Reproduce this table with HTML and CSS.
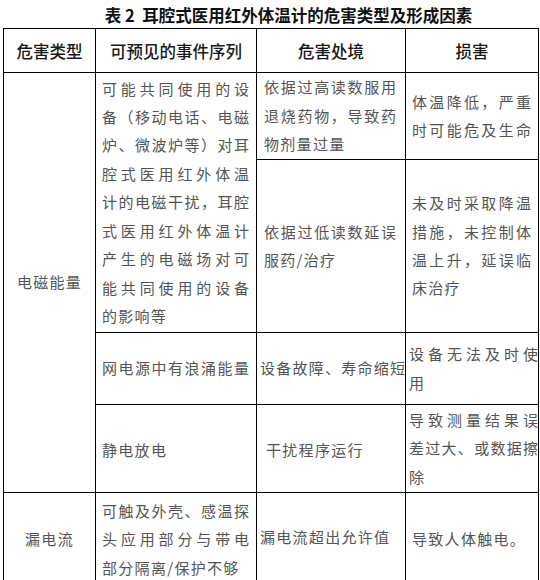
FILE: index.html
```html
<!DOCTYPE html>
<html lang="zh">
<head>
<meta charset="utf-8">
<link rel="stylesheet" href="styles.css">
</head>
<body>
<div class="page">
  <div class="caption">表 2&nbsp; 耳腔式医用红外体温计的危害类型及形成因素</div>
  <table class="hazard">
    <colgroup>
      <col class="c1"><col class="c2"><col class="c3"><col class="c4">
    </colgroup>
    <tr class="head">
      <th>危害类型</th>
      <th>可预见的事件序列</th>
      <th>危害处境</th>
      <th>损害</th>
    </tr>
    <tr class="r1a">
      <td rowspan="4" class="type">电磁能量</td>
      <td rowspan="2" class="seq">
        <span class="j">可能共同使用的设</span>
        <span class="j">备（移动电话、电磁</span>
        <span class="j">炉、微波炉等）对耳</span>
        <span class="j">腔式医用红外体温</span>
        <span class="j">计的电磁干扰，耳腔</span>
        <span class="j">式医用红外体温计</span>
        <span class="j">产生的电磁场对可</span>
        <span class="j">能共同使用的设备</span>
        <span class="l">的影响等</span>
      </td>
      <td class="sit">
        <span class="j">依据过高读数服用</span>
        <span class="j">退烧药物，导致药</span>
        <span class="l">物剂量过量</span>
      </td>
      <td class="harm">
        <span class="j">体温降低，严重</span>
        <span class="j">时可能危及生命</span>
      </td>
    </tr>
    <tr class="r1b">
      <td class="sit">
        <span class="j">依据过低读数延误</span>
        <span class="l">服药/治疗</span>
      </td>
      <td class="harm">
        <span class="j">未及时采取降温</span>
        <span class="j">措施，未控制体</span>
        <span class="j">温上升，延误临</span>
        <span class="l">床治疗</span>
      </td>
    </tr>
    <tr class="r2">
      <td class="seq"><span class="j">网电源中有浪涌能量</span></td>
      <td class="sit tight"><span class="j">设备故障、寿命缩短</span></td>
      <td class="harm tight">
        <span class="j">设备无法及时使</span>
        <span class="l">用</span>
      </td>
    </tr>
    <tr class="r3">
      <td class="seq"><span class="l">静电放电</span></td>
      <td class="sit"><span class="l indent">干扰程序运行</span></td>
      <td class="harm tight">
        <span class="j">导致测量结果误</span>
        <span class="j">差过大、或数据擦</span>
        <span class="l">除</span>
      </td>
    </tr>
    <tr class="r4">
      <td class="type">漏电流</td>
      <td class="seq">
        <span class="j">可触及外壳、感温探</span>
        <span class="j">头应用部分与带电</span>
        <span class="l">部分隔离/保护不够</span>
      </td>
      <td class="sit tight"><span class="l">漏电流超出允许值</span></td>
      <td class="harm"><span class="l">导致人体触电。</span></td>
    </tr>
  </table>
</div>
</body>
</html>
```

FILE: styles.css
```css
html, body {
  margin: 0;
  padding: 0;
  background: #ffffff;
}

body {
  font-family: "Noto Sans CJK SC", "Noto Sans", sans-serif;
}

.page {
  width: 540px;
  padding: 0 0 0 3px;
  box-sizing: border-box;
}

.caption {
  height: 28px;
  line-height: 30px;
  font-size: 16.5px;
  font-weight: bold;
  color: #111;
  text-align: center;
  padding-left: 34px;
}

.hazard {
  border-collapse: collapse;
  table-layout: fixed;
  width: 535px;
}

.c1 { width: 92px; }
.c2 { width: 161px; }
.c3 { width: 149px; }
.c4 { width: 133px; }

.hazard th,
.hazard td {
  border: 1.5px solid #000;
  vertical-align: middle;
  padding: 0;
}

.hazard th {
  font-size: 16.5px;
  font-weight: 500;
  color: #1a1a1a;
  text-align: center;
}

.hazard td {
  font-size: 15px;
  line-height: 28.4px;
  color: #555;
  letter-spacing: 1.3px;
}

.head { height: 44px; }
.r1a { height: 87px; }
.r1b { height: 173px; }
.r2 { height: 72px; }
.r3 { height: 88px; }
.r4 { height: 85px; }

.r3 td,
.r4 td {
  padding-top: 4px !important;
}

.type {
  text-align: center;
}

.seq {
  padding: 0 7px 0 6px !important;
}

.sit {
  padding: 0 9px 0 7px !important;
}

.harm {
  padding: 0 7px 0 6px !important;
}

.sit.tight,
.harm.tight {
  padding: 0 0 0 3px !important;
}

.j {
  display: block;
  white-space: nowrap;
  text-align: justify;
  text-align-last: justify;
  letter-spacing: 0;
}

.l {
  display: block;
  white-space: nowrap;
  text-align: left;
}

.indent {
  padding-left: 2px;
}
```
